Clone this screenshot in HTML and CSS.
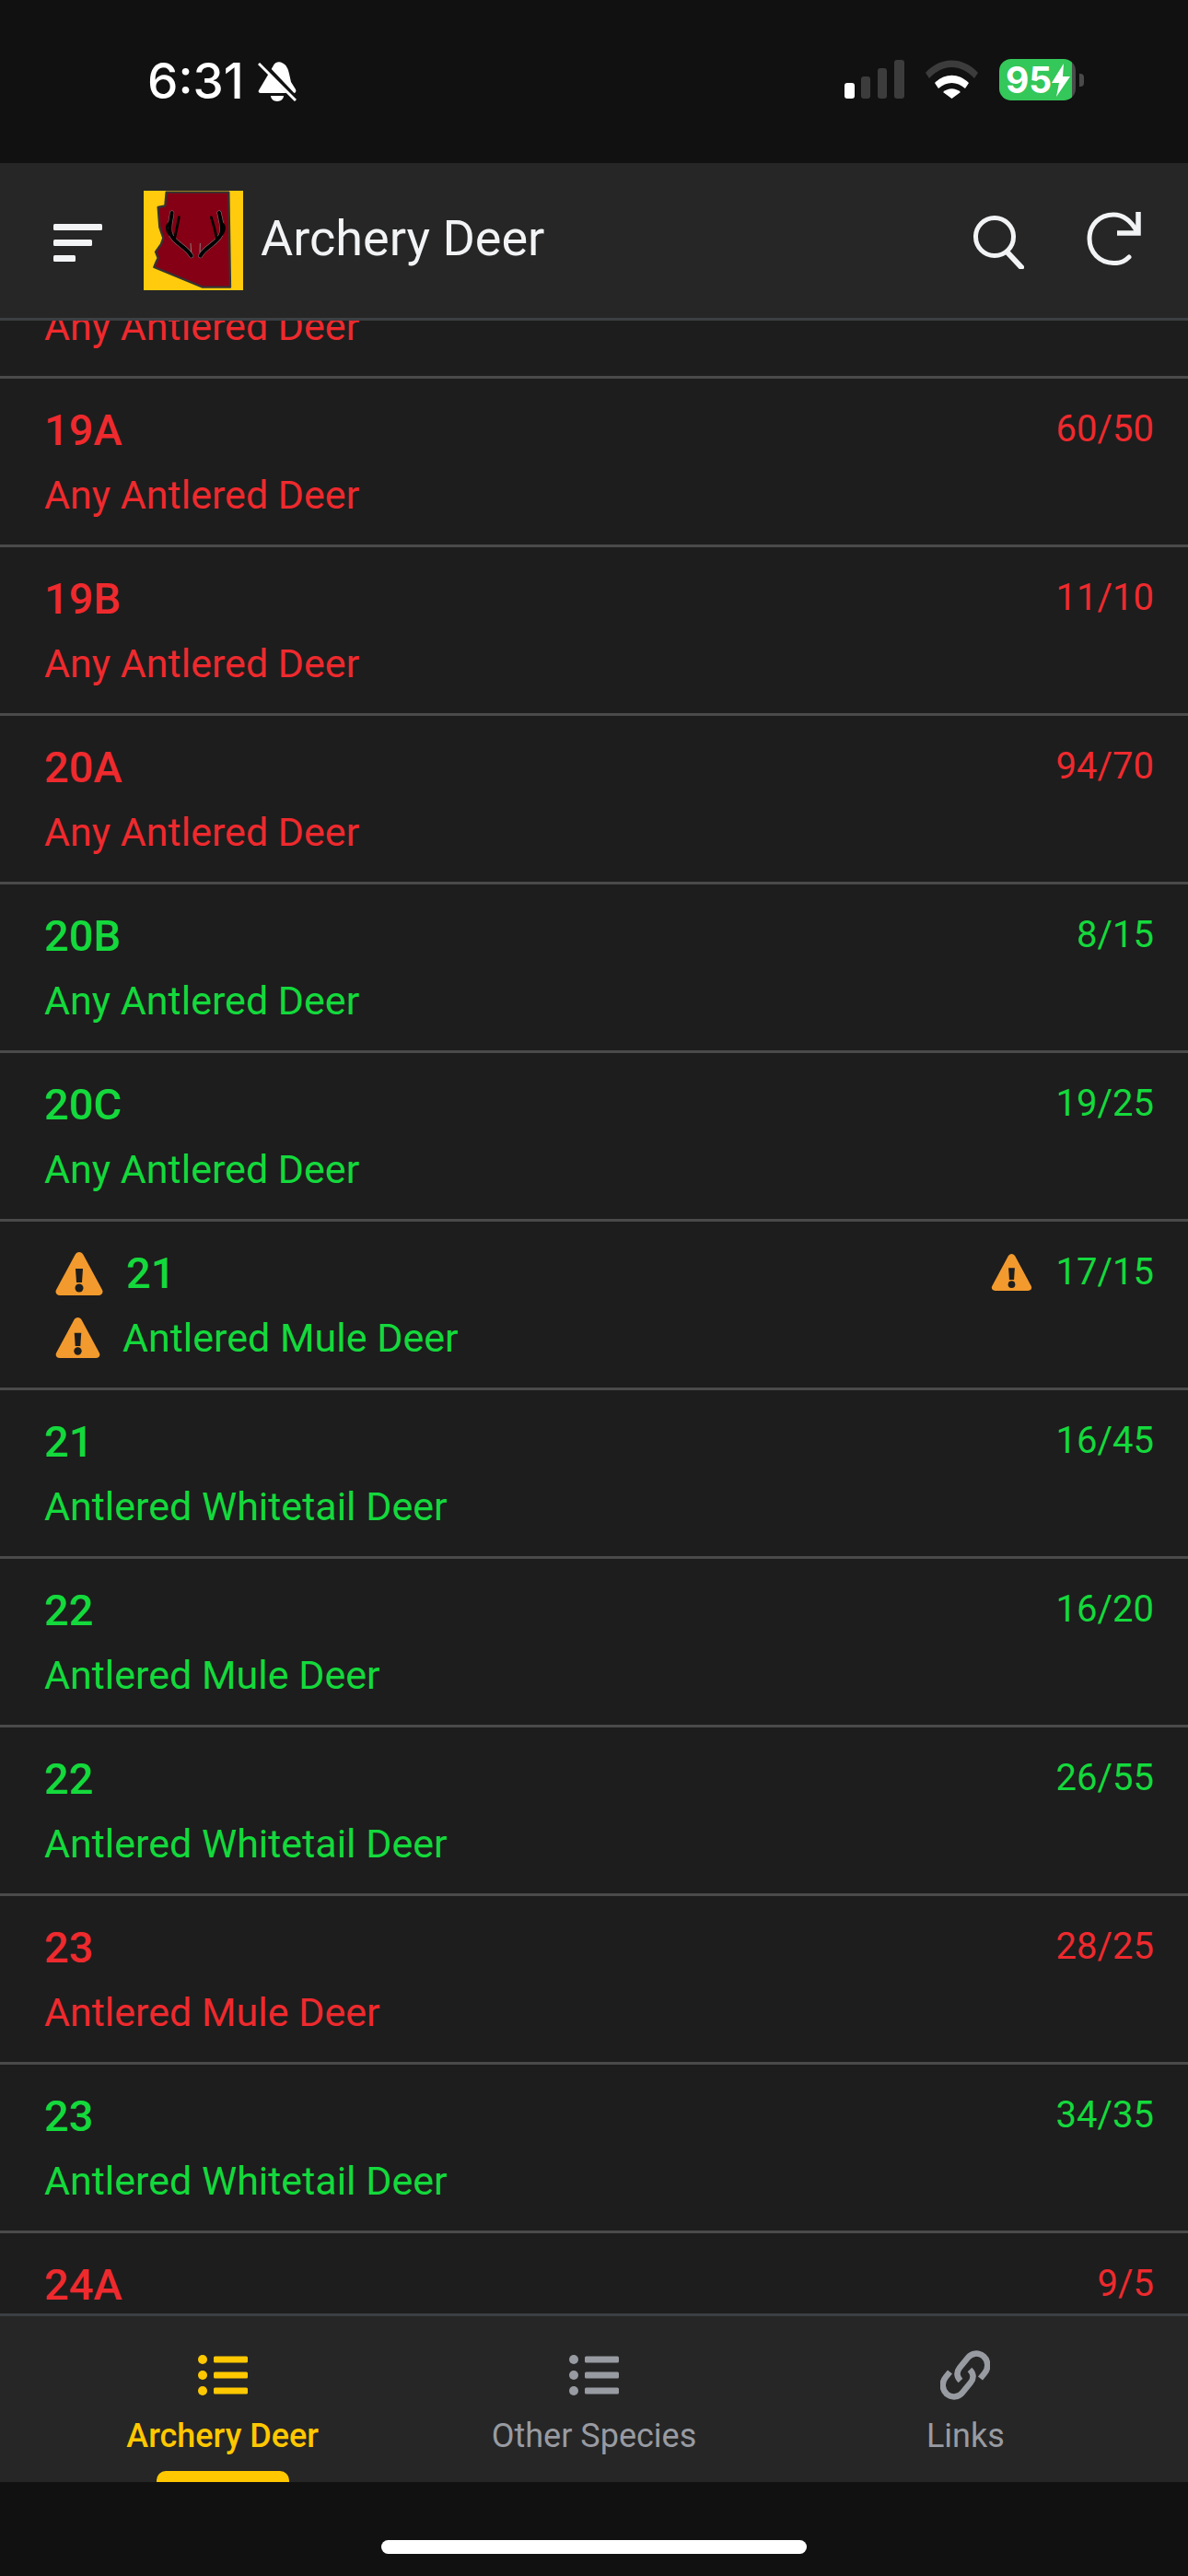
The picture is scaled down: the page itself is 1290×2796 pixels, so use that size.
FILE: index.html
```html
<!DOCTYPE html>
<html>
<head>
    <title>Archery Deer</title>
    <meta charset="UTF-8">
    <meta name="viewport" content="width=device-width, initial-scale=1.0">
    <link rel="stylesheet" href="styles.css">
</head>
<body>
    <div class="app">
        <div class="status-bar">
            <span class="time">6:31</span>
            <svg class="bell" viewBox="0 0 42 44">
                <path fill="#fff" d="M17 5c1-3 6-5 9-3 5 2 7 7 8 12l2 9 5 8c1 2 0 4-2 4H3c-2 0-3-2-2-3l3-5z"/>
                <path fill="#fff" d="M14 38h14c0 3-3 6-7 6s-7-3-7-6z"/>
                <path stroke="#111" stroke-width="6" d="M3 1l38 40"/>
                <path stroke="#fff" stroke-width="3" d="M1 3l40 40"/>
            </svg>
            <div class="status-right">
                <svg class="signal" viewBox="0 0 65 42">
                    <rect x="0" y="25" width="11" height="17" rx="3" fill="#fff"/>
                    <rect x="18" y="18" width="10" height="24" rx="3" fill="#3c3c3c"/>
                    <rect x="36" y="9" width="10" height="33" rx="3" fill="#3c3c3c"/>
                    <rect x="54" y="0" width="11" height="42" rx="3" fill="#3c3c3c"/>
                </svg>
                <svg class="wifi" viewBox="0 0 57 42">
                    <path fill="#3c3c3c" d="M0 14C16-4 41-4 57 14l-4 6C38 4 19 4 4 20z"/>
                    <path fill="#fff" d="M10 25c11-11 26-11 37 0l-4 6c-9-8-20-8-29 0z"/>
                    <path fill="#fff" d="M19 35c6-5 13-5 19 0l-9.500 7z"/>
                </svg>
                <div class="battery">
                    <div class="battery-body">
                        <span class="battery-level">95</span>
                        <svg class="bolt" viewBox="0 0 20 36"><path fill="#fff" d="M13 0L0 21h8L5 36l15-22h-8z"/></svg>
                    </div>
                    <div class="battery-cap"></div>
                </div>
            </div>
        </div>

        <div class="header">
            <svg class="menu-icon" viewBox="0 0 53 41">
                <rect x="0" y="0" width="53" height="7" rx="1.500" fill="#f2f3f5"/>
                <rect x="0" y="17" width="42" height="7" rx="1.500" fill="#f2f3f5"/>
                <rect x="0" y="34" width="24" height="7" rx="1.500" fill="#f2f3f5"/>
            </svg>
            <svg class="logo" viewBox="0 0 324 324">
                <rect width="324" height="324" fill="#ffcb0c"/>
                <path fill="#850014" stroke="#333" stroke-width="7" stroke-linejoin="round" d="M74 5H277L282 314H192L34 249L40 234L47 219L39 199L57 174L64 154L52 119L47 54L70 49Z"/>
                <g fill="none" stroke-linecap="round">
                    <g stroke="#8a7a7e">
                        <path stroke-width="15" d="M155 212C140 182 100 172 88 142C80 118 90 95 92 72"/>
                        <path stroke-width="15" d="M185 212C200 182 240 172 252 142C260 118 250 95 246 72"/>
                    </g>
                    <g stroke="#000">
                        <path stroke-width="12" d="M155 212C140 182 100 172 88 142C80 118 90 95 92 72"/>
                        <path stroke-width="8" d="M100 160C105 135 112 105 115 86"/>
                        <path stroke-width="8" d="M84 142C72 127 74 112 84 104"/>
                        <path stroke-width="12" d="M185 212C200 182 240 172 252 142C260 118 250 95 246 72"/>
                        <path stroke-width="8" d="M239 160C234 135 226 105 220 86"/>
                        <path stroke-width="8" d="M256 142C266 127 264 112 254 104"/>
                    </g>
                    <path stroke-width="3" stroke="#8a7a7e" d="M155 200L153 172"/>
                    <path stroke-width="3" stroke="#8a7a7e" d="M183 200L184 172"/>
                </g>
            </svg>
            <span class="header-title">Archery Deer</span>
            <svg class="search-icon" viewBox="0 0 56 58">
                <circle cx="24" cy="23" r="20.500" fill="none" stroke="#f2f3f5" stroke-width="5"/>
                <path d="M38 40L53 56" fill="none" stroke="#f2f3f5" stroke-width="6" stroke-linecap="round"/>
            </svg>
            <svg class="refresh-icon" viewBox="0 0 59 58">
                <path d="M46 49C41 54 35 56 29 55.500C14 55 3 44 3 29C3 14 14 3 29 3C39 3 48 9 55 22" fill="none" stroke="#f2f3f5" stroke-width="5" stroke-linecap="round"/>
                <path d="M56 0V23H33" fill="none" stroke="#f2f3f5" stroke-width="5.500"/>
            </svg>
        </div>

        <div class="list-wrap">
            <div class="list">
                <div class="row red">
                    <div class="row-main"><div class="unit"></div><div class="species">Any Antlered Deer</div></div>
                </div>
                <div class="row red">
                    <div class="row-main"><div class="unit">19A</div><div class="species">Any Antlered Deer</div></div>
                    <div class="count">60/50</div>
                </div>
                <div class="row red">
                    <div class="row-main"><div class="unit">19B</div><div class="species">Any Antlered Deer</div></div>
                    <div class="count">11/10</div>
                </div>
                <div class="row red">
                    <div class="row-main"><div class="unit">20A</div><div class="species">Any Antlered Deer</div></div>
                    <div class="count">94/70</div>
                </div>
                <div class="row green">
                    <div class="row-main"><div class="unit">20B</div><div class="species">Any Antlered Deer</div></div>
                    <div class="count">8/15</div>
                </div>
                <div class="row green">
                    <div class="row-main"><div class="unit">20C</div><div class="species">Any Antlered Deer</div></div>
                    <div class="count">19/25</div>
                </div>
                <div class="row green">
                    <div class="row-main">
                        <div class="unit warn-unit">
                            <svg class="warn warn-lg" viewBox="0 0 52 47"><path fill="#f29a2e" d="M21.500 3C23.500-1 28.500-1 30.500 3L51 41C52.500 44 50.500 47 47 47H5C1.500 47-.5 44 1 41Z"/><path fill="#1d1d1d" d="M22 18H30L29 33H23Z"/><circle cx="26" cy="39" r="4.500" fill="#1d1d1d"/></svg>
                            21
                        </div>
                        <div class="species warn-species">
                            <svg class="warn warn-md" viewBox="0 0 52 47"><path fill="#f29a2e" d="M21.500 3C23.500-1 28.500-1 30.500 3L51 41C52.500 44 50.500 47 47 47H5C1.500 47-.5 44 1 41Z"/><path fill="#1d1d1d" d="M22 18H30L29 33H23Z"/><circle cx="26" cy="39" r="4.500" fill="#1d1d1d"/></svg>
                            Antlered Mule Deer
                        </div>
                    </div>
                    <div class="count warn-count">
                        <svg class="warn warn-sm" viewBox="0 0 52 47"><path fill="#f29a2e" d="M21.500 3C23.500-1 28.500-1 30.500 3L51 41C52.500 44 50.500 47 47 47H5C1.500 47-.5 44 1 41Z"/><path fill="#1d1d1d" d="M22 18H30L29 33H23Z"/><circle cx="26" cy="39" r="4.500" fill="#1d1d1d"/></svg>
                        17/15
                    </div>
                </div>
                <div class="row green">
                    <div class="row-main"><div class="unit">21</div><div class="species">Antlered Whitetail Deer</div></div>
                    <div class="count">16/45</div>
                </div>
                <div class="row green">
                    <div class="row-main"><div class="unit">22</div><div class="species">Antlered Mule Deer</div></div>
                    <div class="count">16/20</div>
                </div>
                <div class="row green">
                    <div class="row-main"><div class="unit">22</div><div class="species">Antlered Whitetail Deer</div></div>
                    <div class="count">26/55</div>
                </div>
                <div class="row red">
                    <div class="row-main"><div class="unit">23</div><div class="species">Antlered Mule Deer</div></div>
                    <div class="count">28/25</div>
                </div>
                <div class="row green">
                    <div class="row-main"><div class="unit">23</div><div class="species">Antlered Whitetail Deer</div></div>
                    <div class="count">34/35</div>
                </div>
                <div class="row last red">
                    <div class="row-main"><div class="unit">24A</div></div>
                    <div class="count">9/5</div>
                </div>
            </div>
        </div>

        <div class="tabbar">
            <div class="tab active">
                <svg class="tab-icon" viewBox="0 0 54 54"><g fill="currentColor"><circle cx="5" cy="10" r="5"/><circle cx="5" cy="27" r="5"/><circle cx="5" cy="44" r="5"/><rect x="17" y="6.500" width="37" height="7" rx="1.500"/><rect x="17" y="23.500" width="37" height="7" rx="1.500"/><rect x="17" y="40.500" width="37" height="7" rx="1.500"/></g></svg>
                <span class="tab-label">Archery Deer</span>
                <div class="tab-marker"></div>
            </div>
            <div class="tab">
                <svg class="tab-icon" viewBox="0 0 54 54"><g fill="currentColor"><circle cx="5" cy="10" r="5"/><circle cx="5" cy="27" r="5"/><circle cx="5" cy="44" r="5"/><rect x="17" y="6.500" width="37" height="7" rx="1.500"/><rect x="17" y="23.500" width="37" height="7" rx="1.500"/><rect x="17" y="40.500" width="37" height="7" rx="1.500"/></g></svg>
                <span class="tab-label">Other Species</span>
            </div>
            <div class="tab">
                <svg class="tab-icon" viewBox="0 0 54 54"><g fill="none" stroke="currentColor" stroke-width="6.500" stroke-linecap="butt"><path d="M43.500 30.500L48 25C53 19 52 11 47 6.500C41 2 34 3 30 8L21 19C17 24 18 29 22 33"/><path d="M10.500 23.500L6 29C1 35 2 43 7 47.500C13 52 20 51 24 46L33 35C37 30 36 25 32 21"/></g></svg>
                <span class="tab-label">Links</span>
            </div>
        </div>

        <div class="home-area"><div class="home-bar"></div></div>
    </div>
</body>
</html>
```

FILE: styles.css
```css
body {
    margin: 0;
    background-color: #111;
    font-family: Roboto, sans-serif;
}
.app {
    width: 1290px;
    height: 2796px;
    display: flex;
    flex-direction: column;
    overflow: hidden;
}
.status-bar {
    height: 177px;
    flex-shrink: 0;
    box-sizing: border-box;
    background-color: #111;
    display: flex;
    align-items: flex-start;
    padding: 0 113px 0 160px;
    color: white;
}
.time {
    font-family: Inter, sans-serif;
    font-weight: 500;
    font-size: 53px;
    line-height: 64px;
    margin-top: 56px;
}
.bell {
    width: 42px;
    height: 44px;
    margin: 66px 0 0 15px;
}
.status-right {
    margin-left: auto;
    display: flex;
    align-items: flex-start;
}
.signal {
    width: 65px;
    height: 42px;
    margin-top: 65px;
}
.wifi {
    width: 57px;
    height: 42px;
    margin: 65px 0 0 23px;
}
.battery {
    display: flex;
    align-items: center;
    margin: 64px 0 0 23px;
}
.battery-body {
    width: 83px;
    height: 45px;
    border-radius: 13px;
    background: linear-gradient(to right, #34c759 95%, #4a4a4a 95%);
    display: flex;
    align-items: center;
    padding-left: 7px;
    box-sizing: border-box;
}
.battery-level {
    font-family: Inter, sans-serif;
    font-weight: 700;
    font-size: 39px;
    line-height: 45px;
}
.bolt {
    width: 20px;
    height: 36px;
}
.battery-cap {
    width: 5px;
    height: 14px;
    margin-left: 4px;
    border-radius: 0 4px 4px 0;
    background-color: #4a4a4a;
}
.header {
    height: 171px;
    flex-shrink: 0;
    box-sizing: border-box;
    background-color: #262626;
    border-bottom: 3px solid #3c3f43;
    display: flex;
    align-items: flex-start;
    padding-left: 58px;
}
.menu-icon {
    width: 53px;
    height: 41px;
    margin-top: 66px;
}
.logo {
    width: 108px;
    height: 108px;
    margin: 30px 0 0 45px;
}
.header-title {
    font-size: 54px;
    line-height: 64px;
    color: #f2f3f5;
    margin: 50px 0 0 19px;
}
.search-icon {
    width: 56px;
    height: 58px;
    margin: 57px 0 0 auto;
}
.refresh-icon {
    width: 59px;
    height: 58px;
    margin: 53px 51px 0 68px;
}
.list-wrap {
    flex: 1;
    min-height: 0;
    overflow: hidden;
    background-color: #1d1d1d;
}
.list {
    margin-top: -120px;
}
.row {
    height: 183px;
    box-sizing: border-box;
    border-bottom: 3px solid #4a4a4a;
    display: flex;
    justify-content: space-between;
    align-items: flex-start;
    padding: 28px 37px 0 48px;
}
.row.last {
    border-bottom: none;
}
.row.red {
    color: #ee2a2e;
}
.row.green {
    color: #14d93c;
}
.unit {
    font-size: 47px;
    font-weight: 500;
    line-height: 56px;
    height: 56px;
}
.species {
    font-size: 43px;
    line-height: 54px;
    margin-top: 15px;
}
.count {
    font-size: 40px;
    line-height: 50px;
    margin-top: 2px;
}
.warn-unit, .warn-species, .warn-count {
    display: flex;
    align-items: center;
}
.warn-lg {
    width: 52px;
    height: 47px;
    margin-left: 12px;
    margin-right: 25px;
}
.warn-md {
    width: 49px;
    height: 44px;
    margin-left: 12px;
    margin-right: 24px;
}
.warn-sm {
    width: 45px;
    height: 40px;
    margin-right: 26px;
}
.tabbar {
    height: 183px;
    flex-shrink: 0;
    box-sizing: border-box;
    background-color: #262626;
    border-top: 3px solid #3c3f43;
    display: flex;
    padding: 0 40px;
}
.tab {
    flex: 1;
    color: #989ba1;
    display: flex;
    flex-direction: column;
    align-items: center;
    padding-top: 37px;
    box-sizing: border-box;
    position: relative;
}
.tab.active {
    color: #ffc800;
}
.tab-icon {
    width: 54px;
    height: 54px;
}
.tab-label {
    font-size: 36px;
    line-height: 42px;
    margin-top: 18px;
}
.tab.active .tab-label {
    font-weight: 500;
}
.tab-marker {
    position: absolute;
    bottom: 0;
    width: 144px;
    height: 12px;
    border-radius: 10px 10px 0 0;
    background-color: #ffc800;
}
.home-area {
    height: 102px;
    flex-shrink: 0;
    box-sizing: border-box;
    background-color: #111;
    display: flex;
    justify-content: center;
    padding-top: 63px;
}
.home-bar {
    width: 462px;
    height: 15px;
    border-radius: 8px;
    background-color: white;
}
```
